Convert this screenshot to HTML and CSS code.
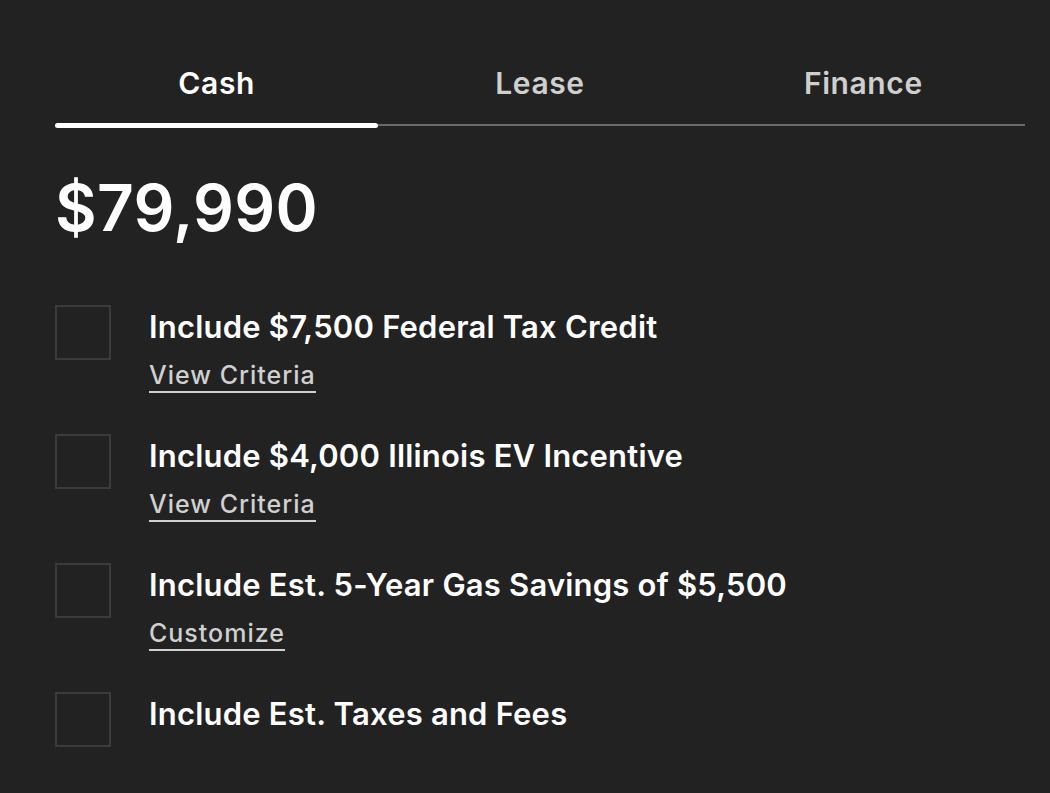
FILE: index.html
```html
<!DOCTYPE html>
<html lang="en">
<head>
<meta charset="utf-8">
<title>Payment options</title>
<link rel="stylesheet" href="styles.css">
</head>
<body>
<main class="panel">
  <nav class="tabs">
    <div class="tab active">Cash</div>
    <div class="tab">Lease</div>
    <div class="tab">Finance</div>
  </nav>
  <div class="price">$79,990</div>
  <ul class="options">
    <li class="option">
      <span class="box"></span>
      <div class="text">
        <div class="label">Include $7,500 Federal Tax Credit</div>
        <a class="link">View Criteria</a>
      </div>
    </li>
    <li class="option">
      <span class="box"></span>
      <div class="text">
        <div class="label">Include $4,000 Illinois EV Incentive</div>
        <a class="link">View Criteria</a>
      </div>
    </li>
    <li class="option">
      <span class="box"></span>
      <div class="text">
        <div class="label">Include Est. 5-Year Gas Savings of $5,500</div>
        <a class="link">Customize</a>
      </div>
    </li>
    <li class="option">
      <span class="box"></span>
      <div class="text">
        <div class="label">Include Est. Taxes and Fees</div>
      </div>
    </li>
  </ul>
</main>
</body>
</html>
```
FILE: styles.css
```css
html, body {
  margin: 0;
  padding: 0;
  background: #222222;
}
body {
  font-family: Inter, "Noto Sans", sans-serif;
  color: #ffffff;
  width: 1050px;
  height: 793px;
  overflow: hidden;
}
.panel {
  padding: 0 25px 0 55px;
}
.tabs {
  display: flex;
  border-bottom: 2px solid #6a6a6a;
}
.tab {
  flex: 1;
  text-align: center;
  font-size: 30px;
  line-height: 36px;
  font-weight: 600;
  letter-spacing: 0.6px;
  color: #cfcfcf;
  padding: 65px 0 23px;
  position: relative;
}
.tab.active {
  color: #ffffff;
}
.tab.active::after {
  content: "";
  position: absolute;
  left: 0;
  right: 0;
  bottom: -4px;
  height: 5px;
  border-radius: 3px;
  background: #ffffff;
}
.price {
  font-size: 64px;
  line-height: 76px;
  font-weight: 600;
  margin-top: 44px;
  letter-spacing: 0.3px;
}
.options {
  list-style: none;
  margin: 59px 0 0;
  padding: 0;
  display: flex;
  flex-direction: column;
  gap: 41px;
}
.option {
  display: flex;
  align-items: flex-start;
  gap: 38px;
  min-height: 55px;
}
.box {
  flex: none;
  width: 52px;
  height: 51px;
  border: 2px solid #3b3b3b;
  box-sizing: content-box;
}
.text {
  display: flex;
  flex-direction: column;
  align-items: flex-start;
  padding-top: 4px;
}
.label {
  font-size: 31px;
  line-height: 36px;
  font-weight: 600;
  letter-spacing: 0.2px;
}
.link {
  margin-top: 16px;
  font-size: 25px;
  line-height: 28px;
  font-weight: 500;
  letter-spacing: 1px;
  color: #d0d0d0;
  border-bottom: 2px solid #d0d0d0;
  padding-bottom: 2px;
}
```
